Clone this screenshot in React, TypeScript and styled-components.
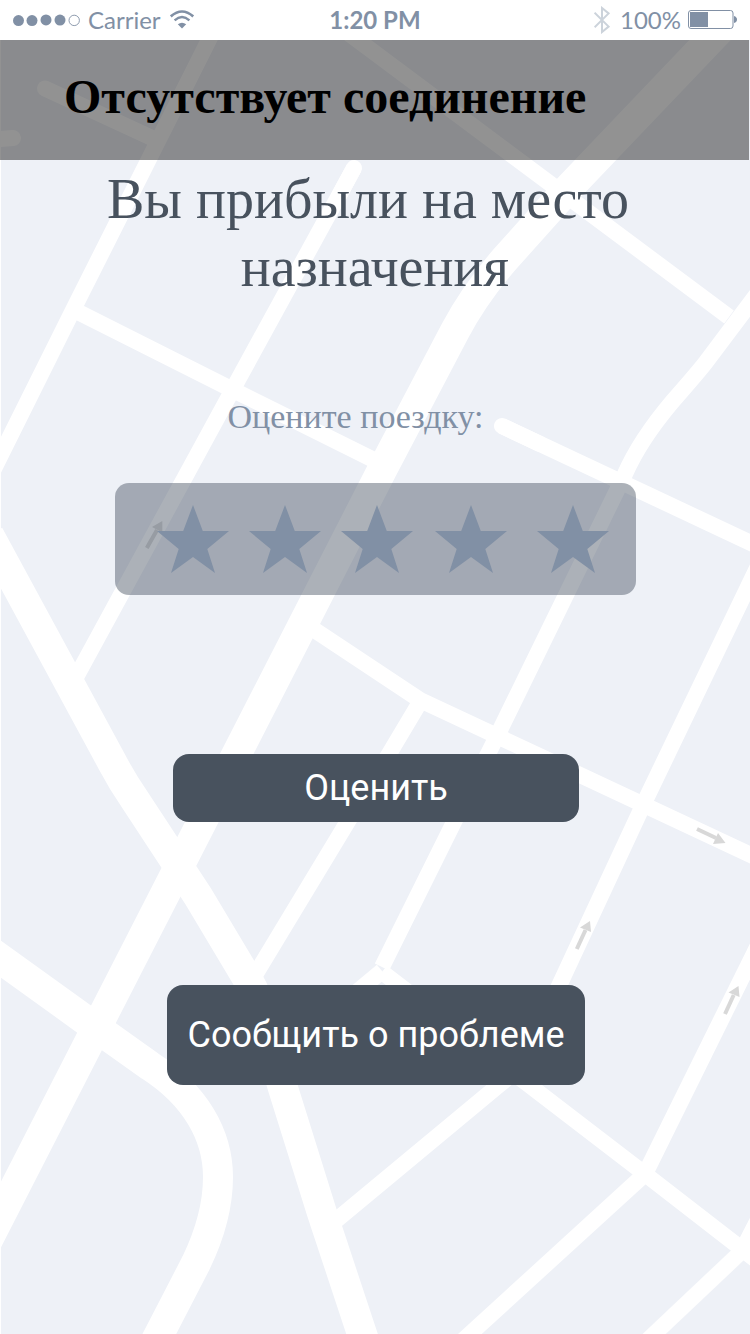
import React from "react";
import styled, { createGlobalStyle } from "styled-components";

const colors = {
  slate: "#48525e",
  steel: "#8190a5",
  pale: "#ccd3db",
  land: "#eef1f7",
  road: "#ffffff",
  arrow: "#d8d8d8",
};

const GlobalStyle = createGlobalStyle`
  *, *::before, *::after { box-sizing: border-box; }
  html, body { margin: 0; padding: 0; background: #fff; }
`;

const Screen = styled.div`
  position: relative;
  display: flex;
  flex-direction: column;
  width: 750px;
  height: 1334px;
  overflow: hidden;
  background: #fff;
`;

const MapLayer = styled.svg`
  position: absolute;
  inset: 0;
  z-index: 0;
  display: block;
`;

const StatusBar = styled.header`
  position: relative;
  z-index: 1;
  flex: none;
  display: grid;
  grid-template-columns: 1fr auto 1fr;
  align-items: center;
  height: 40px;
  padding: 0 13px 0 13px;
  background: #fff;
  color: ${colors.steel};
  font-family: Lato, "Liberation Sans", sans-serif;
  font-size: 24px;
  line-height: 40px;
`;

const StatusGroup = styled.div<{ $end?: boolean }>`
  display: flex;
  align-items: center;
  justify-content: ${(p) => (p.$end ? "flex-end" : "flex-start")};
  height: 40px;
`;

const StatusIcon = styled.svg<{ $gap?: number }>`
  display: block;
  flex: none;
  margin-right: ${(p) => p.$gap ?? 0}px;
`;

const StatusText = styled.span<{ $gap?: number }>`
  margin-right: ${(p) => p.$gap ?? 0}px;
  white-space: nowrap;
`;

const Clock = styled.span`
  font-weight: 700;
`;

const Banner = styled.div`
  position: relative;
  z-index: 1;
  flex: none;
  display: flex;
  align-items: center;
  width: 749px;
  height: 120px;
  padding: 0 64px 7px;
  background: rgba(38, 38, 38, 0.5);
  color: #000;
  font-family: "Liberation Serif", serif;
  font-size: 48px;
  font-weight: 700;
  white-space: nowrap;
`;

const Content = styled.main`
  position: relative;
  z-index: 1;
  display: flex;
  flex-direction: column;
  align-items: center;
  padding-top: 5px;
`;

const Title = styled.h1`
  margin: 0;
  color: ${colors.slate};
  font-family: "Liberation Serif", serif;
  font-size: 56px;
  font-weight: 400;
  line-height: 68px;
  text-align: center;
  white-space: pre;
`;

const Prompt = styled.p`
  margin: 96px 39px 0 0;
  color: ${colors.steel};
  font-family: "Liberation Serif", serif;
  font-size: 34px;
  line-height: 40px;
  white-space: nowrap;
`;

const Rating = styled.div`
  display: flex;
  align-items: flex-start;
  width: 521px;
  height: 112px;
  margin: 46px 0 0 1px;
  padding: 22px 0 0 42px;
  border-radius: 14px;
  background: rgba(75, 86, 100, 0.46);
`;

const StarButton = styled.button<{ $gap: number }>`
  flex: none;
  width: 72px;
  height: 68px;
  margin: 0 ${(p) => p.$gap}px 0 0;
  padding: 0;
  border: 0;
  background: none;
`;

const StarShape = styled.svg`
  display: block;
`;

const ActionButton = styled.button<{
  $width: number;
  $height: number;
  $top: number;
}>`
  flex: none;
  width: ${(p) => p.$width}px;
  height: ${(p) => p.$height}px;
  margin: ${(p) => p.$top}px 0 0 2px;
  padding: 0;
  border: 0;
  border-radius: 16px;
  background: ${colors.slate};
  color: #fff;
  font-family: Roboto, "Liberation Sans", sans-serif;
  font-size: 36px;
  line-height: 42px;
  white-space: nowrap;
`;

const wideRoads = [
  "M752 -4 L565 192 L505 259 Q474 295 455 331 L382 470 L-30 1275",
  "M-11 535 L112 762 Q122 781 135 800 L198 896 L247 978 Q262 1004 268 1035 L282 1085 L322 1213 L369 1355",
  "M-20 944 L84 1019 L150 1066 C195 1095 218 1135 218 1177 C218 1205 211 1232 196 1263 L150 1352",
];

const narrowRoads = [
  "M229 0 L73 310 L-20 497",
  "M76 311 L233 390 L376 461",
  "M354 168 L233 389 L74 681",
  "M304 0 L729 317",
  "M760 290 L706 362 Q700 370 672 402 Q640 440 625 474 L566 595 L501 728 L454 822 L382 967",
  "M502 426 L770 552",
  "M310 627 L420 700 L579 774.5 L770 864",
  "M420 702 L389 754 L347.5 822 L255 975",
  "M382 972 L529 1085 L645 1174 L760 1263",
  "M382 971 L340 1006",
  "M520 1068 L499 1085 L375 1188 L328 1227",
  "M645 1174 L770 921",
  "M645 1174 L448 1354",
  "M742 1251 L633 1354",
  "M742 1251 L770 1196",
  "M770 541 L645 801 L519 1072",
];

const cappedRoads = ["M45 88.5 L152 138", "M-5 139.5 L13 138", "M354 168 L340 194", "M502 426 L540 444"];

const arrows = [
  { tail: [697, 829], neck: [716, 838], head: "725.5,843 718,833 713,844" },
  { tail: [576.8, 949], neck: [585.5, 930], head: "590,921 580,927.5 591,932" },
  { tail: [725, 1014], neck: [733.7, 995], head: "738.5,986 728.5,992.5 739.5,997" },
  { tail: [146.8, 548], neck: [157, 530], head: "162.3,521 152,527 162.3,532.5" },
];

const stars = [20, 20, 22, 30, 0];

function CityMap() {
  return (
    <MapLayer width="750" height="1334" viewBox="0 0 750 1334" aria-hidden="true">
      <rect x="1" y="40" width="749" height="1294" fill={colors.land} />
      <g fill="none" stroke={colors.road} strokeLinejoin="round">
        <g strokeWidth="30">
          {wideRoads.map((d) => (
            <path key={d} d={d} />
          ))}
        </g>
        <g strokeWidth="16">
          {narrowRoads.map((d) => (
            <path key={d} d={d} />
          ))}
        </g>
        <g strokeWidth="16" strokeLinecap="round">
          {cappedRoads.map((d) => (
            <path key={d} d={d} />
          ))}
        </g>
      </g>
      {arrows.map((a) => (
        <g key={a.head} fill={colors.arrow} stroke={colors.arrow}>
          <line
            x1={a.tail[0]}
            y1={a.tail[1]}
            x2={a.neck[0]}
            y2={a.neck[1]}
            strokeWidth="4"
          />
          <polygon points={a.head} stroke="none" />
        </g>
      ))}
    </MapLayer>
  );
}

function SignalDots() {
  return (
    <StatusIcon $gap={8} width="67" height="14" viewBox="13 13 67 14">
      <g fill={colors.steel}>
        <circle cx="18.5" cy="20.6" r="5.5" />
        <circle cx="32" cy="20.6" r="5.5" />
        <circle cx="46" cy="19.9" r="5.5" />
        <circle cx="60" cy="20.1" r="5.5" />
      </g>
      <circle cx="74.2" cy="20.4" r="5.2" fill="none" stroke={colors.steel} strokeWidth="0.9" />
    </StatusIcon>
  );
}

function WifiIcon() {
  return (
    <StatusIcon width="24" height="20" viewBox="173 10 24 20">
      <g fill="none" stroke={colors.steel}>
        <path d="M173.8 16.4 Q185 6.6 196.2 16.4" strokeWidth="2.6" />
        <path d="M177.6 20.4 Q185 13.8 192.4 20.4" strokeWidth="2.4" />
      </g>
      <path d="M180.8 24.2 Q185 21.2 189.2 24.2 L185 28.6 Z" fill={colors.steel} />
    </StatusIcon>
  );
}

function BluetoothIcon() {
  return (
    <StatusIcon $gap={9} width="17" height="28" viewBox="596 6 17 28">
      <path
        d="M596.6 12.6 L610.6 26.6 L604 32 L604 8 L610.6 13.4 L596.6 27.2"
        fill="none"
        stroke={colors.pale}
        strokeWidth="2"
      />
    </StatusIcon>
  );
}

function BatteryIcon() {
  return (
    <StatusIcon width="49" height="20" viewBox="688 10 49 20">
      <rect x="688.5" y="10.5" width="44.5" height="18" rx="2.5" fill="none" stroke={colors.steel} />
      <rect x="690" y="12" width="18" height="15" fill={colors.steel} />
      <path d="M734 16 Q737 17 737 19.5 Q737 22 734 23 Z" fill={colors.steel} />
    </StatusIcon>
  );
}

function Star() {
  return (
    <StarShape width="72" height="68" viewBox="0 0 72 68">
      <polygon
        points="36,0 45.8,26 72,26 50.3,44 58,68 36,52 14,68 21.7,44 0,26 26.2,26"
        fill={colors.steel}
      />
    </StarShape>
  );
}

export default function App() {
  return (
    <>
      <GlobalStyle />
      <Screen>
        <CityMap />
        <StatusBar>
          <StatusGroup>
            <SignalDots />
            <StatusText $gap={9}>Carrier</StatusText>
            <WifiIcon />
          </StatusGroup>
          <Clock>1:20 PM</Clock>
          <StatusGroup $end>
            <BluetoothIcon />
            <StatusText $gap={7}>100%</StatusText>
            <BatteryIcon />
          </StatusGroup>
        </StatusBar>
        <Banner role="alert">Отсутствует соединение</Banner>
        <Content>
          <Title>{"Вы прибыли на место \nназначения"}</Title>
          <Prompt>Оцените поездку:</Prompt>
          <Rating>
            {stars.map((gap, i) => (
              <StarButton key={i} $gap={gap} aria-label={`${i + 1}`}>
                <Star />
              </StarButton>
            ))}
          </Rating>
          <ActionButton $width={406} $height={68} $top={159}>
            Оценить
          </ActionButton>
          <ActionButton $width={418} $height={100} $top={163}>
            Сообщить о проблеме
          </ActionButton>
        </Content>
      </Screen>
    </>
  );
}
